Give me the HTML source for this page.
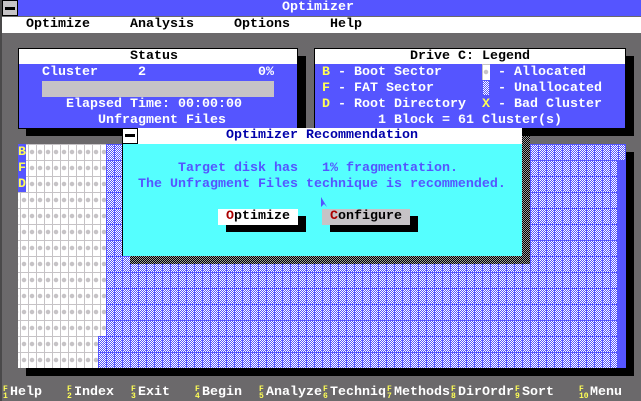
<!DOCTYPE html>
<html><head><style>
*{margin:0;padding:0;box-sizing:border-box}
html,body{width:641px;height:401px;overflow:hidden}
body{background:#6b696b;position:relative;font-family:"Liberation Mono",monospace;font-size:13.33px;font-weight:bold;line-height:18px}
.a{position:absolute;white-space:pre}
.w{color:#fff}.y{color:#ffff55}.k{color:#000}
.chk{background:linear-gradient(90deg,#5555ff 1px,transparent 1px) 0 0/8px 16px,linear-gradient(#5555ff 1px,transparent 1px) 0 0/8px 16px,repeating-conic-gradient(#5555ff 0 25%,#fff 0 50%) 0 0/2px 2px}
.wg{background:radial-gradient(circle,#c6c3c6 2px,transparent 2.5px) 0 0/8px 16px,linear-gradient(90deg,#c6c3c6 1px,transparent 1px) 0 0/8px 16px,linear-gradient(#c6c3c6 1px,transparent 1px) 0 0/8px 16px,#fff}
.dk{background:repeating-conic-gradient(#000 0 25%,#9c9a9c 0 50%) 0 0/2px 2px}
.fk{position:absolute;top:386px;color:#ffff55;font-size:8px;line-height:7px;white-space:pre}
.fl{position:absolute;top:384px;color:#fff;white-space:pre}
</style></head><body>
<div class="a" style="left:0;top:0;width:641px;height:16px;background:#5555ff"></div>
<div class="a" style="left:2px;top:0;width:16px;height:16px;background:#c6c3c6;border:1px solid #000"></div>
<div class="a" style="left:5px;top:7px;width:10px;height:3px;background:#000"></div>
<div class="a w" style="left:282px;top:-1px">Optimizer</div>
<div class="a" style="left:2px;top:17px;width:639px;height:16px;background:#fff"></div>
<div class="a k" style="left:26px;top:16px">Optimize</div>
<div class="a k" style="left:130px;top:16px">Analysis</div>
<div class="a k" style="left:234px;top:16px">Options</div>
<div class="a k" style="left:330px;top:16px">Help</div>
<div class="a" style="left:0;top:0;width:2px;height:401px;background:#4a494a"></div>

<div class="a" style="left:298px;top:56px;width:8px;height:80px;background:#000"></div>
<div class="a" style="left:26px;top:128px;width:280px;height:8px;background:#000"></div>
<div class="a" style="left:18px;top:48px;width:280px;height:81px;background:#5555ff;border:1px solid #000"></div>
<div class="a" style="left:19px;top:49px;width:278px;height:15px;background:#fff"></div>
<div class="a k" style="left:130px;top:48px">Status</div>
<div class="a w" style="left:42px;top:64px">Cluster     2              0%</div>
<div class="a" style="left:42px;top:81px;width:232px;height:16px;background:#c6c3c6"></div>
<div class="a w" style="left:66px;top:96px">Elapsed Time: 00:00:00</div>
<div class="a w" style="left:98px;top:112px">Unfragment Files</div>

<div class="a" style="left:626px;top:56px;width:8px;height:80px;background:#000"></div>
<div class="a" style="left:322px;top:128px;width:312px;height:8px;background:#000"></div>
<div class="a" style="left:314px;top:48px;width:312px;height:81px;background:#5555ff;border:1px solid #000"></div>
<div class="a" style="left:315px;top:49px;width:310px;height:15px;background:#fff"></div>
<div class="a k" style="left:410px;top:48px">Drive C: Legend</div>
<div class="a y" style="left:322px;top:64px">B</div><div class="a w" style="left:338px;top:64px">- Boot Sector</div>
<div class="a y" style="left:322px;top:80px">F</div><div class="a w" style="left:338px;top:80px">- FAT Sector</div>
<div class="a y" style="left:322px;top:96px">D</div><div class="a w" style="left:338px;top:96px">- Root Directory</div>
<div class="a wg" style="left:482px;top:64px;width:8px;height:16px"></div>
<div class="a" style="left:483px;top:81px;width:6px;height:14px;background:repeating-conic-gradient(#5555ff 0 25%,#fff 0 50%) 0 0/2px 2px"></div>
<div class="a y" style="left:482px;top:96px">X</div>
<div class="a w" style="left:498px;top:64px">- Allocated</div>
<div class="a w" style="left:498px;top:80px">- Unallocated</div>
<div class="a w" style="left:498px;top:96px">- Bad Cluster</div>
<div class="a w" style="left:378px;top:112px">1 Block = 61 Cluster(s)</div>

<div class="a" style="left:626px;top:152px;width:8px;height:224px;background:#000"></div>
<div class="a" style="left:26px;top:368px;width:608px;height:8px;background:#000"></div>
<div class="a" style="left:18px;top:144px;width:608px;height:224px;background:#5555ff"></div>
<div class="a chk" style="left:98px;top:144px;width:519px;height:224px"></div>
<div class="a chk" style="left:98px;top:144px;width:527px;height:16px"></div>
<div class="a wg" style="left:18px;top:144px;width:88px;height:192px;background-position:2px 0,2px 0,2px 0"></div>
<div class="a wg" style="left:18px;top:336px;width:80px;height:32px;background-position:2px 0,2px 0,2px 0"></div>
<div class="a" style="left:18px;top:144px;width:8px;height:48px;background:#5555ff"></div>
<div class="a y" style="left:18px;top:144px">B</div>
<div class="a y" style="left:18px;top:160px">F</div>
<div class="a y" style="left:18px;top:176px">D</div>

<div class="a dk" style="left:522px;top:136px;width:8px;height:128px"></div>
<div class="a dk" style="left:130px;top:256px;width:400px;height:8px"></div>
<div class="a" style="left:122px;top:128px;width:400px;height:128px;background:#55ffff;border-left:1px solid #000"></div>
<div class="a" style="left:122px;top:128px;width:400px;height:16px;background:#fff"></div>
<div class="a" style="left:122px;top:128px;width:16px;height:16px;background:#fff;border:1px solid #000"></div>
<div class="a" style="left:125px;top:134px;width:10px;height:3px;background:#000"></div>
<div class="a" style="left:226px;top:127px;color:#0000aa">Optimizer Recommendation</div>
<div class="a" style="left:178px;top:160px;color:#5555ff">Target disk has   1% fragmentation.</div>
<div class="a" style="left:138px;top:176px;color:#5555ff">The Unfragment Files technique is recommended.</div>
<div class="a" style="left:226px;top:216px;width:80px;height:16px;background:#000"></div>
<div class="a" style="left:218px;top:209px;width:80px;height:16px;background:#fff"></div>
<div class="a k" style="left:226px;top:208px"><span style="color:#aa0000">O</span>ptimize</div>
<div class="a" style="left:330px;top:216px;width:88px;height:16px;background:#000"></div>
<div class="a" style="left:322px;top:209px;width:88px;height:16px;background:#c6c3c6"></div>
<div class="a k" style="left:330px;top:208px"><span style="color:#aa0000">C</span>onfigure</div>
<svg class="a" style="left:321px;top:197px" width="8" height="12"><path d="M0 0L0 10L3 7L6 10Z" fill="#5555ff"/></svg>

<div class="fk" style="left:3px">F
1</div><div class="fl" style="left:10px">Help</div>
<div class="fk" style="left:67px">F
2</div><div class="fl" style="left:74px">Index</div>
<div class="fk" style="left:131px">F
3</div><div class="fl" style="left:138px">Exit</div>
<div class="fk" style="left:195px">F
4</div><div class="fl" style="left:202px">Begin</div>
<div class="fk" style="left:259px">F
5</div><div class="fl" style="left:266px">Analyze</div>
<div class="fk" style="left:323px">F
6</div><div class="fl" style="left:330px">Techniq</div>
<div class="fk" style="left:387px">F
7</div><div class="fl" style="left:394px">Methods</div>
<div class="fk" style="left:451px">F
8</div><div class="fl" style="left:458px">DirOrdr</div>
<div class="fk" style="left:515px">F
9</div><div class="fl" style="left:522px">Sort</div>
<div class="fk" style="left:579px">F
10</div><div class="fl" style="left:590px">Menu</div>
</body></html>
